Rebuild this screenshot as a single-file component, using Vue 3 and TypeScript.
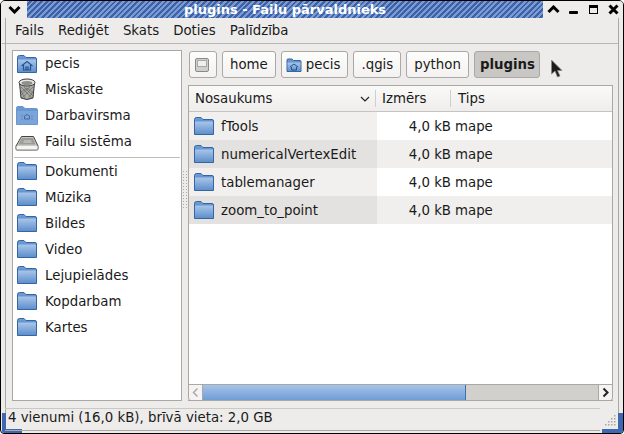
<script setup lang="ts">
const menus = ['Fails', 'Rediģēt', 'Skats', 'Doties', 'Palīdzība']
const places = [
  { name: 'pecis', icon: 'home' },
  { name: 'Miskaste', icon: 'trash' },
  { name: 'Darbavirsma', icon: 'desk' },
  { name: 'Failu sistēma', icon: 'disk' },
]
const folders = ['Dokumenti', 'Mūzika', 'Bildes', 'Video', 'Lejupielādes', 'Kopdarbam', 'Kartes']
const files = ['fTools', 'numericalVertexEdit', 'tablemanager', 'zoom_to_point']
const dots: [number, number][] = [
  [9, 0], [6, 3], [9, 3], [3, 6], [6, 6], [9, 6], [0, 9], [3, 9], [6, 9], [9, 9],
]
</script>

<template>
  <div class="window">
    <svg class="defs" width="0" height="0">
      <defs>
        <linearGradient id="fold" x1="0" y1="0" x2="0" y2="1">
          <stop offset="0" stop-color="#a9c6ea" />
          <stop offset="1" stop-color="#5f8fcb" />
        </linearGradient>
        <linearGradient id="foldback" x1="0" y1="0" x2="0" y2="1">
          <stop offset="0" stop-color="#6f9dd4" />
          <stop offset="1" stop-color="#3f6fb0" />
        </linearGradient>
      </defs>
    </svg>
    <div class="frame-line"></div>
    <div class="corner-left"></div>
    <div class="corner-right"></div>
    <svg class="grip-corner" width="11" height="11" viewBox="0 0 11 11">
      <rect v-for="d in dots" :key="d.join()" :x="d[0]" :y="d[1]" width="1.5" height="1.5" fill="#a9a8a5" />
    </svg>
    <header class="title">
      <button class="wbtn first">
        <svg width="13" height="9" viewBox="0 0 13 9"><path d="M1.5 2 L6.5 7 L11.5 2" fill="none" stroke="#000" stroke-width="3"/></svg>
      </button>
      <div class="caption">plugins - Failu pārvaldnieks</div>
      <button class="wbtn">
        <svg width="13" height="9" viewBox="0 0 13 9"><path d="M1.5 7 L6.5 2 L11.5 7" fill="none" stroke="#000" stroke-width="3"/></svg>
      </button>
      <button class="wbtn">
        <svg width="13" height="13" viewBox="0 0 13 13"><rect x="2" y="8" width="9" height="3" rx="1" fill="#000"/></svg>
      </button>
      <button class="wbtn">
        <svg width="13" height="13" viewBox="0 0 13 13"><rect x="2.5" y="2.5" width="8" height="8" fill="none" stroke="#000"/><rect x="2" y="2" width="9" height="3" fill="#000"/></svg>
      </button>
      <button class="wbtn">
        <svg width="13" height="13" viewBox="0 0 13 13"><path d="M2.5 2.5 L10.5 10.5 M10.5 2.5 L2.5 10.5" stroke="#000" stroke-width="3"/></svg>
      </button>
    </header>

    <nav class="menubar">
      <span v-for="m in menus" :key="m" class="menu">{{ m }}</span>
    </nav>

    <main class="body">
      <aside class="side">
        <div v-for="p in places" :key="p.name" class="place">
          <svg class="ico" width="24" height="24" viewBox="0 0 24 24">
            <template v-if="p.icon === 'home'">
              <path d="M2.5 5.5 Q2.5 3.5 4.5 3.5 H9 L11 5.5 H20 Q21.5 5.5 21.5 7 V20.5 H2.5 Z" fill="url(#foldback)" stroke="#3465a4"/>
              <rect x="3" y="7.5" width="18" height="12.5" fill="url(#fold)"/>
              <path d="M6.5 14 L12 9.5 L17.5 14 M8.5 13 V18 H15.5 V13 M11 18 V15 H13 V18" fill="none" stroke="#27538f" stroke-width="1.2"/>
            </template>
            <template v-else-if="p.icon === 'trash'">
              <path d="M4.5 6 L6 21 Q12 24 18 21 L19.5 6 Z" fill="#aaaaa6" stroke="#3a3a38"/>
              <ellipse cx="12" cy="5.5" rx="8" ry="3.5" fill="#e8e8e4" stroke="#3a3a38"/>
              <ellipse cx="12" cy="6" rx="5.5" ry="2" fill="#8e8e8a"/>
              <path d="M6 10 L17 21 M9 10 L18 19 M12 11 L18 16 M6 14 L10 21 M18 10 L7 21 M15 10 L6 18 M12 11 L6 15 M18 14 L14 21" stroke="#6a6a66" stroke-width="0.7" fill="none"/>
            </template>
            <template v-else-if="p.icon === 'desk'">
              <path d="M1.5 5 Q1.5 3.5 3 3.5 H8 L10 5.5 H21 Q22.5 5.5 22.5 7 V21.5 H1.5 Z" fill="#6a97cf" stroke="#6a97cf"/>
              <rect x="2" y="8" width="20" height="13" fill="#7ba4d8"/>
              <path d="M9.5 16 V13 L12 11.5 L14.5 13 V16 Z" fill="none" stroke="#3f6ba6"/>
              <path d="M6.5 13 h1 M6.5 16 h1 M16.5 13 h1 M16.5 16 h1" stroke="#3f6ba6"/>
            </template>
            <template v-else>
              <path d="M6.5 7.5 H18.5 L23 17 V20 Q23 21 22 21 H2 Q1 21 1 20 V17 Z" fill="#c8c8c4" stroke="#444"/>
              <path d="M7 9 H18 L20.5 15.5 H3.5 Z" fill="#9c9c98"/>
              <path d="M9 11 H16 L17 14 H8 Z" fill="#b8b8b4"/>
              <rect x="1.5" y="17" width="21" height="3.5" fill="#f4f4f2"/>
            </template>
          </svg>
          <span>{{ p.name }}</span>
        </div>
        <div class="sep"></div>
        <div v-for="f in folders" :key="f" class="place">
          <svg class="ico" width="24" height="24" viewBox="0 0 24 24">
            <path d="M2.5 5.5 Q2.5 3.5 4.5 3.5 H9 L11 5.5 H20 Q21.5 5.5 21.5 7 V20.5 H2.5 Z" fill="url(#foldback)" stroke="#3465a4"/>
            <rect x="3" y="7.5" width="18" height="12.5" fill="url(#fold)"/>
          </svg>
          <span>{{ f }}</span>
        </div>
      </aside>

      <div class="grip"></div>

      <section class="content">
        <div class="pathbar">
          <button class="crumb root">
            <svg width="16" height="16" viewBox="0 0 16 16"><rect x="1.5" y="1.5" width="13" height="13" rx="1.5" fill="#cfcfcb" stroke="#8a8a86"/><rect x="3.5" y="3.5" width="9" height="6" fill="#efefed" stroke="#a8a8a4"/></svg>
          </button>
          <button class="crumb">home</button>
          <button class="crumb withicon">
            <svg width="16" height="16" viewBox="0 0 16 16"><path d="M1 3 Q1 2 2 2 H6 L7.5 3.5 H14 Q15 3.5 15 4.5 V14.5 H1 Z" fill="url(#foldback)" stroke="#3465a4"/><rect x="1.5" y="5.5" width="13" height="8.5" fill="url(#fold)"/><path d="M4 10 L8 7 L12 10 M5.5 10 V13 H10.5 V10" fill="none" stroke="#27538f"/></svg>
            pecis
          </button>
          <button class="crumb">.qgis</button>
          <button class="crumb">python</button>
          <button class="crumb active">plugins</button>
          <svg class="cursor" width="14" height="20" viewBox="0 0 14 20"><path d="M1.5 1 V15 L5 12 L7.5 18 L10 17 L7.5 11.5 H12 Z" fill="#1c1c1c" stroke="#888" stroke-width="0.8"/></svg>
        </div>

        <div class="list">
          <div class="head">
            <div class="hc c1">Nosaukums
              <svg width="10" height="6" viewBox="0 0 10 6"><path d="M1 1 L5 5 L9 1" fill="none" stroke="#222" stroke-width="1.2"/></svg>
            </div>
            <div class="hc c2">Izmērs</div>
            <div class="hc c3">Tips</div>
          </div>
          <div class="rows">
            <div v-for="(f, i) in files" :key="f" class="row" :class="{ odd: i % 2 === 1 }">
              <div class="cell c1 name">
                <svg width="24" height="24" viewBox="0 0 24 24">
                  <path d="M2.5 5.5 Q2.5 3.5 4.5 3.5 H9 L11 5.5 H20 Q21.5 5.5 21.5 7 V20.5 H2.5 Z" fill="url(#foldback)" stroke="#3465a4"/>
                  <rect x="3" y="7.5" width="18" height="12.5" fill="url(#fold)"/>
                </svg>
                <span>{{ f }}</span>
              </div>
              <div class="cell c2 size">4,0 kB</div>
              <div class="cell c3">mape</div>
            </div>
          </div>
          <div class="scroll">
            <div class="arrow">
              <svg width="7" height="11" viewBox="0 0 7 11"><path d="M5.5 1.5 L1.5 5.5 L5.5 9.5" fill="none" stroke="#aaa" stroke-width="1.5"/></svg>
            </div>
            <div class="track"><div class="thumb"></div></div>
            <div class="arrow right">
              <svg width="7" height="11" viewBox="0 0 7 11"><path d="M1.5 1.5 L5.5 5.5 L1.5 9.5" fill="none" stroke="#222" stroke-width="2"/></svg>
            </div>
          </div>
        </div>
      </section>
    </main>

    <footer class="status">
      <span>4 vienumi (16,0 kB), brīvā vieta: 2,0 GB</span>
    </footer>
  </div>
</template>

<style>
html, body { margin: 0; padding: 0; background: #fff; }
</style>

<style scoped>
.window {
  position: relative;
  box-sizing: border-box;
  width: 624px;
  height: 434px;
  overflow: hidden;
  display: flex;
  flex-direction: column;
  padding: 0 5px 2px 1px;
  background: #edecea;
  border: 1px solid #000;
  border-radius: 5px 5px 4px 4px;
  font-family: "DejaVu Sans", sans-serif;
  font-size: 13.33px;
  color: #1a1a1a;
}
.defs { position: absolute; }
.frame-line {
  position: absolute;
  left: 4px;
  right: 4px;
  top: 17px;
  bottom: 3px;
  border-left: 1px solid #a9a8a5;
  border-right: 1px solid #a9a8a5;
  pointer-events: none;
}
.corner-left {
  position: absolute;
  left: 1px;
  bottom: 0;
  width: 20px;
  height: 20px;
  box-sizing: border-box;
  border-left: 4px solid #4067b0;
  border-bottom: 4px solid #4067b0;
  border-bottom-left-radius: 3px;
}
.corner-right {
  position: absolute;
  right: 0;
  bottom: 0;
  width: 21px;
  height: 20px;
  box-sizing: border-box;
  border-right: 5px solid #4067b0;
  border-bottom: 4px solid #4067b0;
  border-bottom-right-radius: 3px;
}
.grip-corner { position: absolute; right: 7px; bottom: 7px; }
.title {
  display: flex;
  align-items: center;
  height: 17px;
  margin: 0 -5px 0 -1px;
  background: repeating-linear-gradient(135deg, #3a62ab 0 2px, #7d9bd0 2px 4px);
  flex: none;
}
.wbtn {
  width: 20px;
  height: 18px;
  padding: 0;
  border: 0;
  background: #edecea;
  display: flex;
  align-items: center;
  justify-content: center;
  flex: none;
}
.first { width: 26px; }
.caption {
  flex: 1;
  text-align: center;
  color: #fff;
  font-weight: bold;
  font-size: 13px;
  line-height: 17px;
}
.menubar {
  display: flex;
  height: 25px;
  align-items: center;
  padding-left: 13px;
  gap: 14px;
  border-bottom: 1px solid #b8b7b4;
  flex: none;
}
.menu { line-height: 25px; }
.body { flex: 1; display: flex; padding: 6px 0 6px 10px; min-height: 0; }
.side {
  width: 170px;
  height: 351px;
  box-sizing: border-box;
  flex: none;
  background: #fff;
  border: 1px solid #a9a8a5;
}
.place {
  height: 26px;
  display: flex;
  align-items: center;
  gap: 6px;
  padding-left: 2px;
}
.place:first-child { height: 25px; }
.sep { height: 1px; background: #bdbdba; margin: 3px 1px 0; }
.ico { flex: none; }
.grip {
  width: 6px;
  flex: none;
  margin-top: 120px;
  height: 40px;
  background-image: radial-gradient(#a8a7a4 0.7px, transparent 0.8px);
  background-size: 3px 3px;
}
.content { flex: 1; display: flex; flex-direction: column; min-width: 0; }
.pathbar {
  display: flex;
  gap: 5px;
  height: 35px;
  box-sizing: border-box;
  padding: 1px 0 0 1px;
  align-items: flex-start;
  flex: none;
}
.crumb {
  height: 27px;
  box-sizing: border-box;
  padding: 0 7px;
  border: 1px solid #a9a8a5;
  border-radius: 3px;
  background: linear-gradient(#fdfdfc, #f3f2f0);
  font: inherit;
  color: #1a1a1a;
  display: flex;
  align-items: center;
  gap: 4px;
}
.crumb.root { width: 28px; padding: 0 4px; }
.crumb.withicon { padding: 0 7px 0 4px; }
.crumb.active { background: #c8c7c4; font-weight: bold; padding: 0 4px 0 5px; }
.cursor { margin: 8px 0 0 5px; }
.list {
  width: 425px;
  height: 316px;
  box-sizing: border-box;
  border: 1px solid #a9a8a5;
  background: #fff;
  display: flex;
  flex-direction: column;
}
.head {
  display: flex;
  height: 25px;
  flex: none;
  background: linear-gradient(#fafaf9, #eeedeb);
  border-bottom: 1px solid #c4c3c0;
}
.hc {
  display: flex;
  align-items: center;
  justify-content: space-between;
  padding: 0 6px;
  box-sizing: border-box;
  background-image: linear-gradient(#cfcecb, #cfcecb);
  background-size: 1px 17px;
  background-position: right center;
  background-repeat: no-repeat;
}
.c1 { width: 188px; flex: none; }
.c2 { width: 76px; flex: none; }
.c3 { flex: 1; }
.hc.c1 { width: 187px; }
.hc.c2 { width: 75px; }
.hc.c3 { background: none; justify-content: flex-start; padding-left: 7px; }
.rows { flex: 1; }
.row { display: flex; height: 28px; align-items: stretch; }
.row.odd { background: #f0efed; }
.cell { display: flex; align-items: center; padding: 0 2px; box-sizing: border-box; }
.cell.c1 { background: #f1f0ee; }
.row.odd .cell.c1 { background: #e3e2e0; }
.name { gap: 5px; padding-left: 3px; }
.size { justify-content: flex-end; }
.scroll {
  height: 15px;
  display: flex;
  flex: none;
  margin: 0 -1px -1px;
  border-top: 1px solid #a9a8a5;
  border-bottom: 1px solid #a9a8a5;
  background: #d1d0cc;
}
.arrow {
  width: 15px;
  box-sizing: border-box;
  background: #f5f4f2;
  display: flex;
  align-items: center;
  justify-content: center;
  border: 1px solid #a9a8a5;
  border-width: 0 1px;
  border-radius: 0 0 0 3px;
}
.arrow.right { border-radius: 0 0 3px 0; }
.track { flex: 1; }
.thumb {
  width: 263px;
  height: 100%;
  box-sizing: border-box;
  background: linear-gradient(#a6c4e8, #6f9dd6);
  border-right: 1px solid #3f6fb0;
}
.status {
  height: 23px;
  box-sizing: border-box;
  flex: none;
  line-height: 17px;
  padding-left: 5px;
  border-top: 1px solid #c9c8c5;
  border-bottom: 1px solid #a9a8a5;
  margin-right: 18px;
  margin-left: 3px;
  padding-left: 3px;
  position: relative;
  z-index: 1;
}
</style>
